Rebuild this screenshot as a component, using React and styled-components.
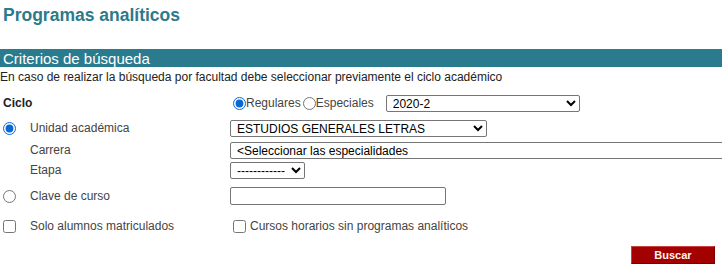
import React, { useState } from 'react'
import styled, { createGlobalStyle } from 'styled-components'

const GlobalStyle = createGlobalStyle`
  body {
    margin: 0;
    background: #fff;
    font-family: "Liberation Sans", Arial, sans-serif;
    color: #333;
  }
`

const Page = styled.div`
  width: 722px;
  height: 274px;
  overflow: hidden;
`

const Title = styled.h1`
  margin: 0;
  padding: 5px 0 0 3px;
  height: 49px;
  box-sizing: border-box;
  font-size: 17.5px;
  font-weight: bold;
  color: #2c7a8b;
`

const SectionBar = styled.div`
  height: 18px;
  background: #2b7b8e;
  color: #fff;
  font-size: 15px;
  line-height: 19px;
  padding-left: 3px;
`

const Note = styled.p`
  margin: 0;
  padding-top: 3px;
  font-size: 12px;
  line-height: 14px;
  color: #222;
`

const Form = styled.div`
  display: grid;
  grid-template-columns: 230px 1fr;
  align-items: center;
  padding-top: ${props => props.top || 0}px;
`

const Row = styled.div`
  display: contents;
`

const Left = styled.div`
  display: flex;
  align-items: center;
  height: ${props => props.h}px;
  font-size: 12px;
`

const Right = styled.div`
  display: flex;
  align-items: center;
  height: ${props => props.h}px;
  font-size: 12px;
  white-space: nowrap;
`

const CycleLabel = styled.span`
  font-weight: bold;
  color: #222;
  padding-left: 3px;
`

const Radio = styled.input.attrs({ type: 'radio' })`
  width: 13px;
  height: 13px;
  margin: 0 0 0 ${props => props.ml || 3}px;
  accent-color: #0a67d8;
`

const Check = styled.input.attrs({ type: 'checkbox' })`
  width: 13px;
  height: 13px;
  margin: 0 0 0 ${props => props.ml || 3}px;
`

const FieldLabel = styled.span`
  margin-left: ${props => props.ml || 14}px;
  color: #444;
`

const InlineLabel = styled.span`
  color: #444;
`

const Select = styled.select`
  height: 17px;
  width: ${props => props.w}px;
  margin-left: ${props => props.ml || 0}px;
  font-family: "Liberation Sans", Arial, sans-serif;
  font-size: 12px;
  color: #000;
  border: 1px solid #767676;
  border-radius: 2px;
  padding: 0 0 0 2px;
  background: #fff;
`

const TextBox = styled.input`
  width: 216px;
  height: 18px;
  box-sizing: border-box;
  border: 1px solid #767676;
  border-radius: 2px;
  font-size: 12px;
`

const Actions = styled.div`
  display: flex;
  justify-content: flex-end;
  padding: 6px 7px 0 0;
`

const Button = styled.button`
  width: 84px;
  height: 18px;
  background: #a30000;
  border: 1px solid #7a0000;
  border-top-color: #c84040;
  border-left-color: #c84040;
  color: #fff6ee;
  font-family: "Liberation Sans", Arial, sans-serif;
  font-size: 11px;
  font-weight: bold;
  padding: 0;
`

export default function App() {
  const [tipo, setTipo] = useState('reg')
  const [modo, setModo] = useState('unidad')

  return (
    <Page>
      <GlobalStyle />
      <Title>Programas analíticos</Title>
      <SectionBar>Criterios de búsqueda</SectionBar>
      <Note>En caso de realizar la búsqueda por facultad debe seleccionar previamente el ciclo académico</Note>
      <Form top={6}>
        <Row>
          <Left h={26}><CycleLabel>Ciclo</CycleLabel></Left>
          <Right h={26}>
            <Radio ml={3} checked={tipo === 'reg'} onChange={() => setTipo('reg')} />
            <InlineLabel>Regulares</InlineLabel>
            <Radio ml={2} checked={tipo === 'esp'} onChange={() => setTipo('esp')} />
            <InlineLabel>Especiales</InlineLabel>
            <Select w={194} ml={12}><option>2020-2</option></Select>
          </Right>
        </Row>
        <Row>
          <Left h={24}>
            <Radio ml={3} checked={modo === 'unidad'} onChange={() => setModo('unidad')} />
            <FieldLabel>Unidad académica</FieldLabel>
          </Left>
          <Right h={24}><Select w={257}><option>ESTUDIOS GENERALES LETRAS</option></Select></Right>
        </Row>
        <Row>
          <Left h={20}><FieldLabel ml={30}>Carrera</FieldLabel></Left>
          <Right h={20}><Select w={520}><option>&lt;Seleccionar las especialidades</option></Select></Right>
        </Row>
        <Row>
          <Left h={20}><FieldLabel ml={30}>Etapa</FieldLabel></Left>
          <Right h={20}><Select w={75}><option>------------</option></Select></Right>
        </Row>
        <Row>
          <Left h={32}>
            <Radio ml={3} checked={modo === 'clave'} onChange={() => setModo('clave')} />
            <FieldLabel>Clave de curso</FieldLabel>
          </Left>
          <Right h={32}><TextBox /></Right>
        </Row>
        <Row>
          <Left h={28}>
            <Check ml={3} />
            <FieldLabel>Solo alumnos matriculados</FieldLabel>
          </Left>
          <Right h={28}>
            <Check ml={3} />
            <FieldLabel ml={4}>Cursos horarios sin programas analíticos</FieldLabel>
          </Right>
        </Row>
      </Form>
      <Actions>
        <Button>Buscar</Button>
      </Actions>
    </Page>
  )
}
